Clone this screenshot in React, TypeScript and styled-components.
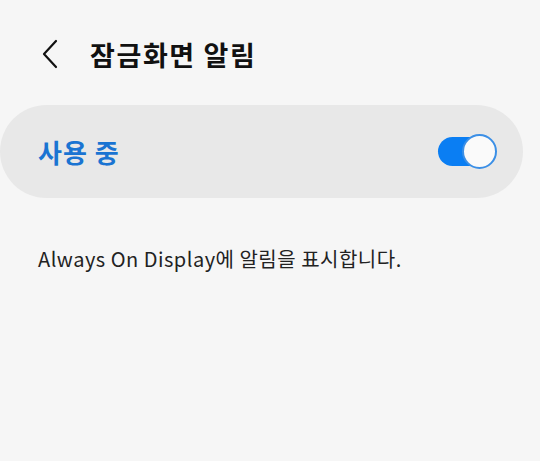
import styled, { createGlobalStyle } from "styled-components";

const GlobalStyle = createGlobalStyle`
  html, body {
    margin: 0;
    padding: 0;
    background: #f6f6f6;
  }
  body {
    font-family: "Noto Sans CJK KR", "Noto Sans", sans-serif;
    width: 540px;
    height: 461px;
    overflow: hidden;
  }
`;

// page wrapper
const Page = styled.div`
  display: flex;
  flex-direction: column;
  width: 540px;
  height: 461px;
  background: #f6f6f6;
`;

const Header = styled.div`
  display: flex;
  align-items: center;
  height: 56px;
  margin-top: 26px;
  padding-left: 38px;
  gap: 28px;
`;

const BackButton = styled.button`
  display: flex;
  align-items: center;
  justify-content: center;
  width: 24px;
  height: 32px;
  padding: 0;
  border: none;
  background: none;
`;

const Title = styled.h1`
  margin: 0;
  font-size: 27px;
  font-weight: 700;
  color: #111;
  letter-spacing: 1.6px;
`;

const Card = styled.div`
  display: flex;
  align-items: center;
  justify-content: space-between;
  width: 523px;
  height: 93px;
  margin-top: 23px;
  padding: 0 26px 0 38px;
  box-sizing: border-box;
  background: #e8e8e8;
  border-radius: 47px;
`;

const CardLabel = styled.span`
  font-size: 26px;
  font-weight: 700;
  color: #1a74d2;
  letter-spacing: 1px;
`;

// switch: track with the knob lying over its right end
const Toggle = styled.div`
  position: relative;
  width: 59px;
  height: 35px;
`;

const Track = styled.div<{ $on: boolean }>`
  position: absolute;
  left: 0;
  top: 3px;
  width: 52px;
  height: 29px;
  border-radius: 15px;
  background: ${(p) => (p.$on ? "#0a7ef3" : "#bdbdbd")};
`;

const Knob = styled.div<{ $on: boolean }>`
  position: absolute;
  ${(p) => (p.$on ? "right: 0;" : "left: 0;")}
  top: 0;
  width: 31px;
  height: 31px;
  border-radius: 50%;
  background: #fafafa;
  border: 2px solid ${(p) => (p.$on ? "#3b8fe6" : "#9e9e9e")};
`;

const Description = styled.p`
  margin: 46px 0 0 38px;
  font-size: 20px;
  color: #222;
  letter-spacing: 0.5px;
`;

export default function App() {
  const enabled = true;
  return (
    <>
      <GlobalStyle />
      <Page>
        <Header>
          <BackButton>
            <svg width="18" height="30" viewBox="0 0 18 30">
              <path
                d="M15 2 L3 15 L15 28"
                fill="none"
                stroke="#111"
                strokeWidth="2.2"
                strokeLinecap="round"
                strokeLinejoin="round"
              />
            </svg>
          </BackButton>
          <Title>잠금화면 알림</Title>
        </Header>
        <Card>
          <CardLabel>사용 중</CardLabel>
          <Toggle>
            <Track $on={enabled} />
            <Knob $on={enabled} />
          </Toggle>
        </Card>
        <Description>Always On Display에 알림을 표시합니다.</Description>
      </Page>
    </>
  );
}
